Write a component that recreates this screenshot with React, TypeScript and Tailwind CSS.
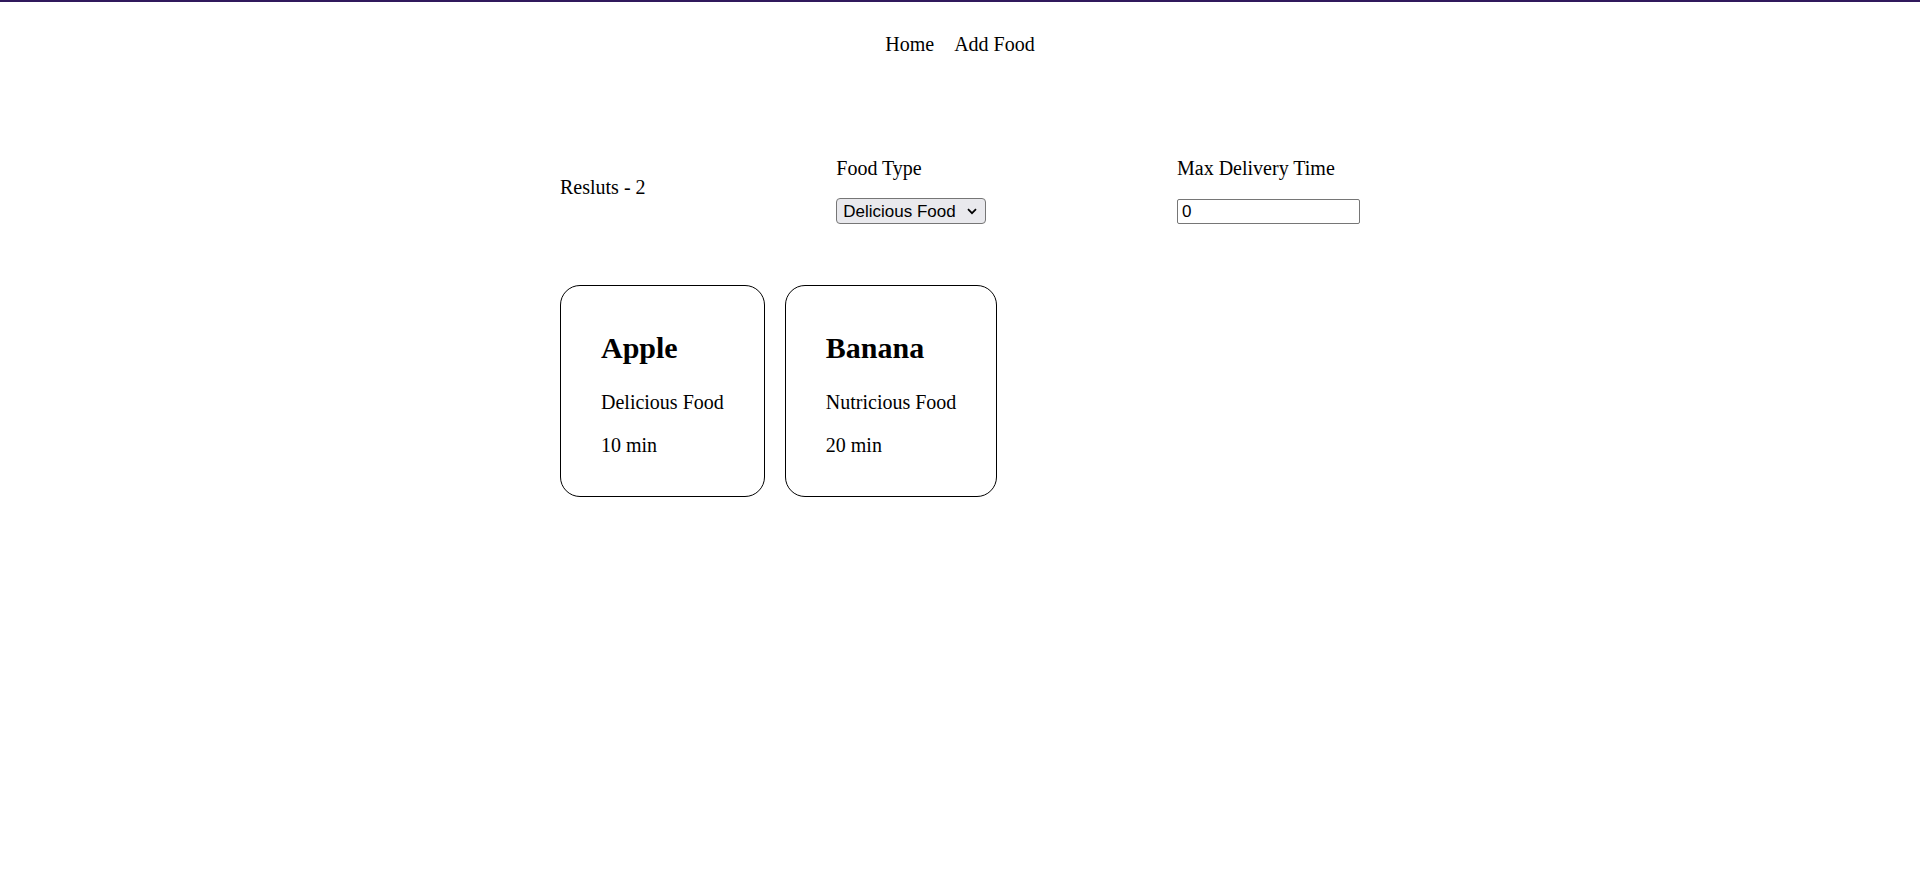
import React from "react";

const foods = [
  { name: "Apple", type: "Delicious Food", time: "10 min" },
  { name: "Banana", type: "Nutricious Food", time: "20 min" },
];

export default function App() {
  return (
    <div className="min-h-screen bg-white text-black border-t-2 border-[#30195c] font-['Liberation_Serif','Times_New_Roman',serif] text-[20px] leading-[23px]">
      <nav className="flex justify-center gap-[20px] pt-[31px]">
        <a className="cursor-pointer">Home</a>
        <a className="cursor-pointer">Add Food</a>
      </nav>

      <main className="w-[800px] mx-auto">
        <div className="flex justify-between items-start mt-[101px]">
          <div className="mt-[19px]">Resluts - 2</div>

          <div className="flex flex-col items-start">
            <label>Food Type</label>
            <div className="relative mt-[18px]">
              <select
                defaultValue="Delicious Food"
                className="appearance-none block w-[150px] h-[26px] bg-[#e9e9ed] border border-[#767676] rounded-[4px] pl-[6px] pr-[24px] pt-[2px] font-['Liberation_Sans',Arial,sans-serif] text-[17px] leading-[22px] text-black outline-none"
              >
                <option>Delicious Food</option>
                <option>Nutricious Food</option>
              </select>
              <svg
                className="pointer-events-none absolute right-[9px] top-[10px]"
                width="10"
                height="7"
                viewBox="0 0 10 7"
                fill="none"
              >
                <path d="M1 1.2 L5 5.2 L9 1.2" stroke="#000" strokeWidth="1.7" />
              </svg>
            </div>
          </div>

          <div className="flex flex-col items-start">
            <label>Max Delivery Time</label>
            <input
              type="text"
              defaultValue="0"
              className="mt-[19px] w-[183px] h-[25px] border border-[#767676] rounded-[2px] px-[4px] pt-[1px] font-['Liberation_Sans',Arial,sans-serif] text-[17px] text-black outline-none"
            />
          </div>
        </div>

        <div className="flex items-start gap-[20px] mt-[61px]">
          {foods.map((f) => (
            <div key={f.name} className="border border-black rounded-[20px] px-[40px] pt-[20px] pb-[19.5px]">
              <h2 className="text-[30px] leading-[34.5px] font-bold my-[25px]">{f.name}</h2>
              <p className="my-[20px]">{f.type}</p>
              <p className="my-[20px]">{f.time}</p>
            </div>
          ))}
        </div>
      </main>
    </div>
  );
}
